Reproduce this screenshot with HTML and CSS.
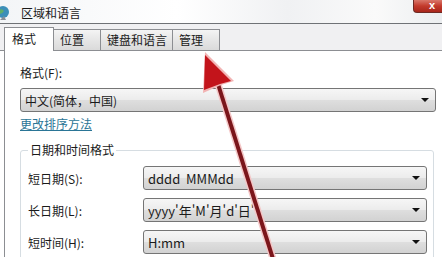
FILE: index.html
```html
<!DOCTYPE html>
<html lang="zh-CN">
<head>
    <meta charset="UTF-8">
    <meta name="viewport" content="width=device-width, initial-scale=1.0">
    <title>区域和语言</title>
    <link rel="stylesheet" href="styles.css">
</head>
<body>
    <div class="window">
        <div class="titlebar">
            <svg class="title-icon" width="16" height="16" viewBox="0 0 16 16">
                <circle cx="6" cy="7" r="6" fill="#3c8fb8"/>
                <path d="M2 5 Q5 3 7 6 Q5 9 3 9 Z" fill="#5fae6a"/>
                <path d="M7 11 L9 15 L3 15 Z" fill="#8a8f96"/>
            </svg>
            <span class="title-text">区域和语言</span>
            <div class="close-btn">x</div>
        </div>

        <div class="tabbar">
            <div class="tab tab-active tab-format">格式</div>
            <div class="tab tab-location">位置</div>
            <div class="tab tab-keyboard">键盘和语言</div>
            <div class="tab tab-admin">管理</div>
        </div>

        <div class="panel">
            <div class="field-label">格式(F):</div>
            <div class="select select-wide">
                <span>中文(简体，中国)</span>
                <i class="caret"></i>
            </div>
            <a class="link" href="#">更改排序方法</a>

            <fieldset class="group">
                <legend>日期和时间格式</legend>
                <div class="row">
                    <span class="row-label">短日期(S):</span>
                    <div class="select"><span>dddd&nbsp;&nbsp;MMMdd</span><i class="caret"></i></div>
                </div>
                <div class="row">
                    <span class="row-label">长日期(L):</span>
                    <div class="select"><span>yyyy'年'M'月'd'日'</span><i class="caret"></i></div>
                </div>
                <div class="row">
                    <span class="row-label">短时间(H):</span>
                    <div class="select"><span>H:mm</span><i class="caret"></i></div>
                </div>
            </fieldset>
        </div>

        <!-- annotation arrow drawn over the dialog -->
        <svg class="arrow" width="442" height="257" viewBox="0 0 442 257">
            <line x1="218" y1="84" x2="274" y2="262" stroke="#f4c7c7" stroke-width="7"/>
            <line x1="218" y1="84" x2="274" y2="262" stroke="#7b161b" stroke-width="4"/>
            <polygon points="205,52 234,81 221,85 203,93" fill="#f2b3b3"/>
            <polygon points="205,55 231,81 220,84 204,90" fill="#c3141b"/>
        </svg>
    </div>
</body>
</html>
```

FILE: styles.css
```css
body {
    margin: 0;
    font-family: "Noto Sans CJK SC", "Liberation Sans", sans-serif;
    font-size: 12px;
    color: #1a1a1a;
    background: #ffffff;
}
.window {
    position: relative;
    width: 442px;
    height: 257px;
    overflow: hidden;
    background: #ffffff;
}
.titlebar {
    height: 23px;
    display: flex;
    align-items: center;
    background: linear-gradient(to right, #f3f5f7 0%, #ffffff 40%, #f0f1f3 65%, #fafafa 85%, #eceef0 100%);
    border-bottom: 1px solid #6f7276;
}
.title-icon {
    margin-left: -3px;
    margin-top: 2px;
}
.title-text {
    margin-left: 8px;
    font-size: 12px;
    line-height: 16px;
    margin-top: 2px;
}
.close-btn {
    margin-left: auto;
    align-self: flex-start;
    width: 29px;
    height: 13px;
    padding-left: 15px;
    box-sizing: border-box;
    background: linear-gradient(#d9776a, #c33a2c 50%, #a8261b);
    border: 1px solid #6e2a24;
    border-top: none;
    border-right: none;
    border-radius: 0 0 0 4px;
    color: #ffffff;
    font-family: "Liberation Sans", sans-serif;
    font-weight: bold;
    font-size: 11px;
    line-height: 11px;
}
.tabbar {
    height: 26px;
    display: flex;
    align-items: flex-end;
    padding-left: 4px;
    background: #f0f0f2;
    border-bottom: 1px solid #8c8e92;
}
.tab {
    height: 21px;
    box-sizing: border-box;
    padding-left: 6px;
    line-height: 20px;
    background: linear-gradient(#f4f4f4, #e6e6e6 50%, #dadada);
    border: 1px solid #8c8e92;
    border-bottom: none;
    border-left: none;
}
.tab-active {
    height: 24px;
    margin-bottom: -1px;
    background: #ffffff;
    border-left: 1px solid #8c8e92;
    padding-left: 7px;
    line-height: 22px;
}
.tab-format { width: 50px; }
.tab-location { width: 47px; }
.tab-keyboard { width: 72px; }
.tab-admin { width: 47px; }
.panel {
    border-left: 1px solid #8c8e92;
    margin-left: 4px;
    padding: 14px 6px 0 15px;
}
.field-label {
    line-height: 16px;
}
.select {
    height: 24px;
    box-sizing: border-box;
    display: flex;
    align-items: center;
    padding-left: 4px;
    border: 1px solid #757575;
    border-radius: 3px;
    background: linear-gradient(#f6f6f6, #ececec 48%, #dedede 52%, #d2d2d2);
    font-size: 13px;
}
.select-wide {
    margin-top: 7px;
    font-size: 12px;
}
.caret {
    margin-left: auto;
    margin-right: 6px;
    width: 0;
    height: 0;
    border-left: 4px solid transparent;
    border-right: 4px solid transparent;
    border-top: 4px solid #111111;
}
.link {
    display: inline-block;
    margin-top: 4px;
    line-height: 16px;
    color: #2a7596;
    text-decoration: underline;
}
.group {
    margin: 10px 2px 0 0;
    padding: 8px 6px 0 7px;
    border: 1px solid #d6dde2;
    border-radius: 3px;
    min-height: 140px;
}
.group legend {
    padding: 0 2px;
    line-height: 16px;
}
.row {
    display: flex;
    align-items: center;
    margin-bottom: 8px;
}
.row-label {
    width: 115px;
    flex-shrink: 0;
}
.row .select {
    flex: 1;
}
.arrow {
    position: absolute;
    left: 0;
    top: 0;
}
```
